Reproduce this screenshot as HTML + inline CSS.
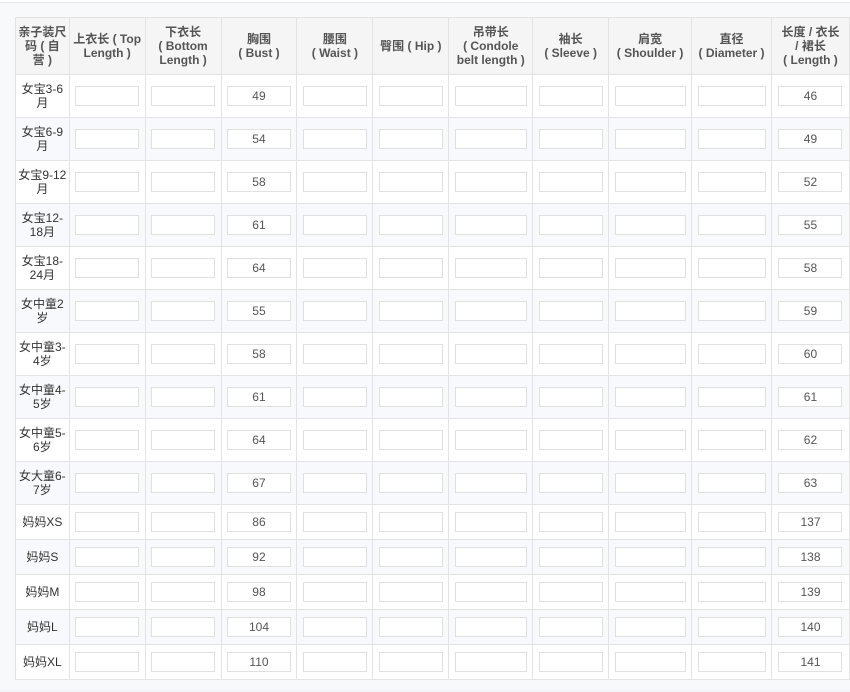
<!DOCTYPE html>
<html><head><meta charset="utf-8"><style>
body{margin:0;background:#f4f6f9;width:850px;height:692px;overflow:hidden;font-family:"Liberation Sans","Noto Sans CJK SC",sans-serif;}
.top{position:absolute;left:0;top:0;width:850px;height:2px;background:#fff;border-bottom:1px solid #e3e6ea}
.wrap{position:absolute;left:0;top:3px;width:850px;height:686px;background:#f7f9fb}
table{position:absolute;left:15px;top:17px;border-collapse:collapse;table-layout:fixed;font-size:12px;color:#333}
td,th{border:1px solid #e3e3e3;text-align:center;padding:0 2px;line-height:14px}
th{background:#f5f5f5;font-weight:bold;height:56px;color:#555}
tr.a td{background:#fff}
tr.b td{background:#f7f9fc}
tr.t td{height:42px}
tr.s td{height:34px}
.i{display:block;margin:0 auto;height:18px;border:1px solid #e0e0e0;background:#fff;line-height:18px;color:#555}
</style></head><body>
<div class="top"></div><div class="wrap"></div>
<table>
<colgroup><col style="width:54px"><col style="width:76px"><col style="width:76px"><col style="width:76px"><col style="width:76px"><col style="width:76px"><col style="width:84px"><col style="width:76px"><col style="width:83px"><col style="width:80px"><col style="width:78px"></colgroup>
<tr><th>亲子装尺<br>码 ( 自<br>营 )</th><th>上衣长 ( Top<br>Length )</th><th>下衣长<br>( Bottom<br>Length )</th><th>胸围<br>( Bust )</th><th>腰围<br>( Waist )</th><th>臀围 ( Hip )</th><th>吊带长<br>( Condole<br>belt length )</th><th>袖长<br>( Sleeve )</th><th>肩宽<br>( Shoulder )</th><th>直径<br>( Diameter )</th><th>长度 / 衣长<br>/ 裙长<br>( Length )</th></tr>
</table>
<script>
var rows=[["女宝3-6<br>月",49,46],["女宝6-9<br>月",54,49],["女宝9-12<br>月",58,52],["女宝12-<br>18月",61,55],["女宝18-<br>24月",64,58],["女中童2<br>岁",55,59],["女中童3-<br>4岁",58,60],["女中童4-<br>5岁",61,61],["女中童5-<br>6岁",64,62],["女大童6-<br>7岁",67,63],["妈妈XS",86,137],["妈妈S",92,138],["妈妈M",98,139],["妈妈L",104,140],["妈妈XL",110,141]];
var w=[62,62,62,62,62,62,70,62,69,66,62];
var t=document.querySelector('table');
rows.forEach(function(r,k){var tr=document.createElement('tr');tr.className=(k%2?'b':'a')+' '+(k<10?'t':'s');
var h='<td>'+r[0]+'</td>';
for(var c=1;c<11;c++){var v=c==3?r[1]:(c==10?r[2]:'');h+='<td><span class="i" style="width:'+w[c]+'px">'+v+'</span></td>';}
tr.innerHTML=h;t.appendChild(tr);});
</script>
</body></html>
